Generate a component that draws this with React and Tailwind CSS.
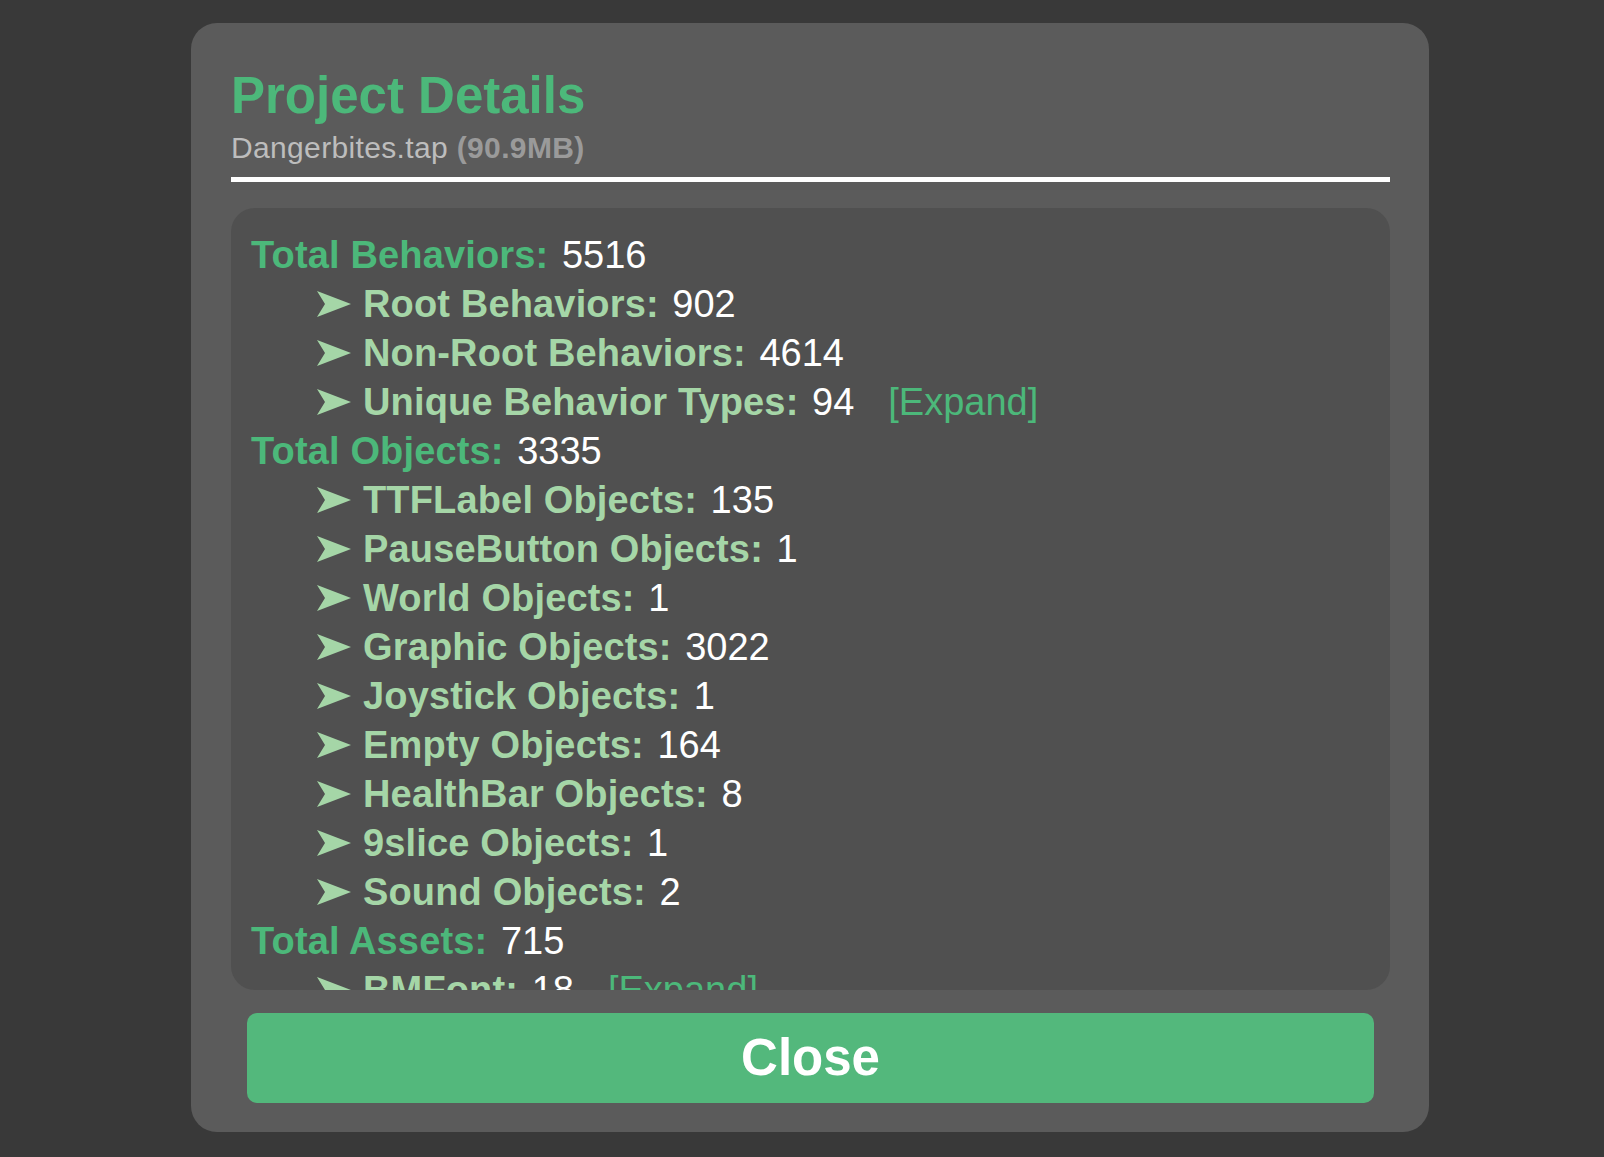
import React from 'react';

const font = { fontFamily: '"Liberation Sans", Arial, Helvetica, sans-serif' };

const rows = [
    { main: true, label: 'Total Behaviors', value: 5516 },
    { label: 'Root Behaviors', value: 902 },
    { label: 'Non-Root Behaviors', value: 4614 },
    { label: 'Unique Behavior Types', value: 94, expand: true },
    { main: true, label: 'Total Objects', value: 3335 },
    { label: 'TTFLabel Objects', value: 135 },
    { label: 'PauseButton Objects', value: 1 },
    { label: 'World Objects', value: 1 },
    { label: 'Graphic Objects', value: 3022 },
    { label: 'Joystick Objects', value: 1 },
    { label: 'Empty Objects', value: 164 },
    { label: 'HealthBar Objects', value: 8 },
    { label: '9slice Objects', value: 1 },
    { label: 'Sound Objects', value: 2 },
    { main: true, label: 'Total Assets', value: 715 },
    { label: 'BMFont', value: 18, expand: true },
];

function Arrow() {
    return (
        <svg width="34" height="26" viewBox="0 0 34 26" className="inline-block mr-[12px]" style={{ verticalAlign: 'baseline' }}>
            <path d="M0 0 L34 13 L0 26 L8 13 Z" fill="#a5d6a7" />
        </svg>
    );
}

function Row({ row }) {
    return (
        <div className="h-[49px] leading-[49px] whitespace-nowrap text-[38px]">
            {row.main ? (
                <span className="font-bold tracking-[0.15px] text-[#4cb87a]">{row.label}:</span>
            ) : (
                <span className="pl-[66px]">
                    <Arrow />
                    <span className="font-bold tracking-[0.15px] text-[#a5d6a7]">{row.label}:</span>
                </span>
            )}
            <span className="ml-[3px] text-white"> {row.value}</span>
            {row.expand && <span className="ml-[34px] text-[#4cb87a]">[Expand]</span>}
        </div>
    );
}

export default function App() {
    return (
        <div className="min-h-[1157px] w-full bg-[#393939] pl-[191px] pt-[23px]" style={font}>
            <div className="w-[1238px] h-[1109px] bg-[#5b5b5b] rounded-[26px] pt-[44px] pl-[40px] pr-[39px] pb-[29px] flex flex-col">
                {/* Header */}
                <h1 className="text-[51px] leading-[58px] font-bold text-[#4cb87a]">Project Details</h1>
                <p className="mt-[6px] text-[30px] leading-[34px] tracking-[0.35px] text-[#bdbdbd]">
                    Dangerbites.tap <span className="font-bold text-[#9a9a9a]">(90.9MB)</span>
                </p>
                <div className="mt-[12px] h-[5px] bg-white"></div>

                {/* Stats list */}
                <div className="mt-[26px] h-[782px] bg-[#505050] rounded-[24px] overflow-hidden pt-[23px] pl-[20px]">
                    {rows.map((r, i) => <Row key={i} row={r} />)}
                </div>

                <button className="mt-[23px] mx-[16px] h-[90px] rounded-[10px] bg-[#53b87c] text-white text-[51px] font-bold">
                    Close
                </button>
            </div>
        </div>
    );
}
